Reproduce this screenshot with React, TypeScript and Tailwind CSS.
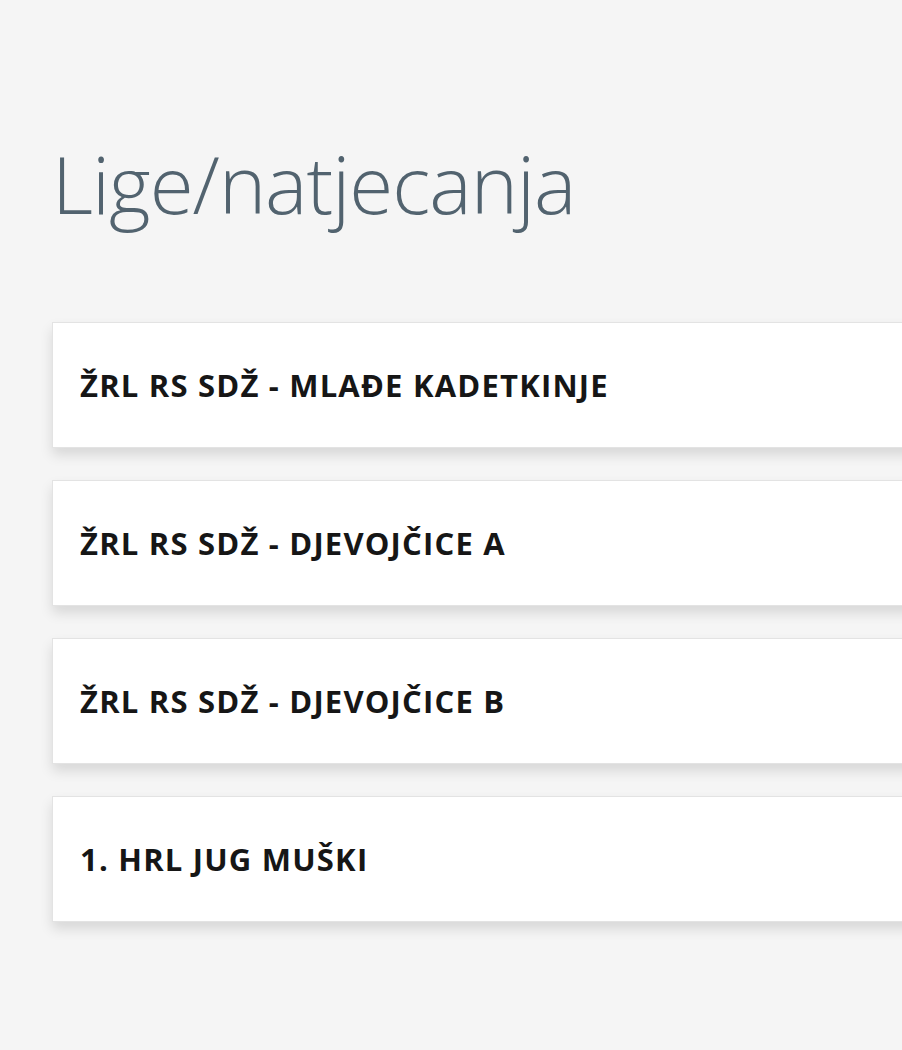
import React from "react"

const leagues = [
  "ŽRL RS SDŽ - MLAĐE KADETKINJE",
  "ŽRL RS SDŽ - DJEVOJČICE A",
  "ŽRL RS SDŽ - DJEVOJČICE B",
  "1. HRL JUG MUŠKI",
]

export default function App() {
  return (
    <div className="min-h-[1050px] w-full overflow-hidden bg-[#f5f5f5] pl-[52px] pt-[128px]">
      <h1 className="text-[80px] leading-[110px] font-extralight text-[#52636f] tracking-[-1px]" style={{ fontFamily: '"Open Sans", "Noto Sans", sans-serif' }}>
        Lige/natjecanja
      </h1>
      <div className="mt-[84px] flex flex-col gap-[32px]">
        {leagues.map((name) => (
          <div
            key={name}
            className="h-[126px] w-[calc(100%+40px)] flex items-center bg-white border border-[#e3e3e3] pl-[27px] shadow-[0_7px_12px_rgba(0,0,0,0.12)]"
          >
            <span className="text-[31px] font-bold text-[#161616] tracking-[1.2px]" style={{ fontFamily: '"Open Sans", "Noto Sans", sans-serif' }}>
              {name}
            </span>
          </div>
        ))}
      </div>
    </div>
  )
}
